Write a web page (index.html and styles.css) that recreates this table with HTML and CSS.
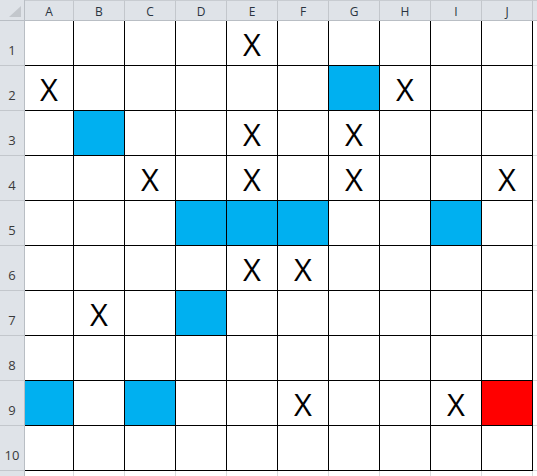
FILE: index.html
```html
<!DOCTYPE html>
<html>
<head>
<meta charset="utf-8">
<link rel="stylesheet" href="styles.css">
</head>
<body>
<div class="sheet">
  <div class="corner"><svg class="tri" width="12" height="11" viewBox="0 0 12 11"><polygon points="12,0 12,11 0,11" fill="#c3c7cc"/></svg></div>
  <div class="ch ca">A</div><div class="ch">B</div><div class="ch">C</div><div class="ch">D</div><div class="ch">E</div><div class="ch">F</div><div class="ch">G</div><div class="ch">H</div><div class="ch">I</div><div class="ch">J</div><div class="ch kh"></div>

  <div class="rh">1</div>
  <div class="c"></div><div class="c"></div><div class="c"></div><div class="c"></div><div class="c">X</div><div class="c"></div><div class="c"></div><div class="c"></div><div class="c"></div><div class="c"></div><div class="k"></div>

  <div class="rh">2</div>
  <div class="c">X</div><div class="c"></div><div class="c"></div><div class="c"></div><div class="c"></div><div class="c"></div><div class="c blue"></div><div class="c">X</div><div class="c"></div><div class="c"></div><div class="k"></div>

  <div class="rh">3</div>
  <div class="c"></div><div class="c blue"></div><div class="c"></div><div class="c"></div><div class="c">X</div><div class="c"></div><div class="c">X</div><div class="c"></div><div class="c"></div><div class="c"></div><div class="k"></div>

  <div class="rh">4</div>
  <div class="c"></div><div class="c"></div><div class="c">X</div><div class="c"></div><div class="c">X</div><div class="c"></div><div class="c">X</div><div class="c"></div><div class="c"></div><div class="c">X</div><div class="k"></div>

  <div class="rh">5</div>
  <div class="c"></div><div class="c"></div><div class="c"></div><div class="c blue"></div><div class="c blue"></div><div class="c blue"></div><div class="c"></div><div class="c"></div><div class="c blue"></div><div class="c"></div><div class="k"></div>

  <div class="rh">6</div>
  <div class="c"></div><div class="c"></div><div class="c"></div><div class="c"></div><div class="c">X</div><div class="c">X</div><div class="c"></div><div class="c"></div><div class="c"></div><div class="c"></div><div class="k"></div>

  <div class="rh">7</div>
  <div class="c"></div><div class="c">X</div><div class="c"></div><div class="c blue"></div><div class="c"></div><div class="c"></div><div class="c"></div><div class="c"></div><div class="c"></div><div class="c"></div><div class="k"></div>

  <div class="rh">8</div>
  <div class="c"></div><div class="c"></div><div class="c"></div><div class="c"></div><div class="c"></div><div class="c"></div><div class="c"></div><div class="c"></div><div class="c"></div><div class="c"></div><div class="k"></div>

  <div class="rh">9</div>
  <div class="c blue"></div><div class="c"></div><div class="c blue"></div><div class="c"></div><div class="c"></div><div class="c">X</div><div class="c"></div><div class="c"></div><div class="c">X</div><div class="c red"></div><div class="k"></div>

  <div class="rh">10</div>
  <div class="c"></div><div class="c"></div><div class="c"></div><div class="c"></div><div class="c"></div><div class="c"></div><div class="c"></div><div class="c"></div><div class="c"></div><div class="c"></div><div class="k"></div>

  <div class="rh"></div>
  <div class="e"></div><div class="e"></div><div class="e"></div><div class="e"></div><div class="e"></div><div class="e"></div><div class="e"></div><div class="e"></div><div class="e"></div><div class="e"></div><div class="e"></div>
</div>
</body>
</html>
```
FILE: styles.css
```css
html, body {
  margin: 0;
  padding: 0;
  background: #ffffff;
  overflow: hidden;
}

.sheet {
  display: grid;
  grid-template-columns: 25px 49px repeat(9, 51px) 40px;
  grid-template-rows: 21px repeat(10, 45px) 30px;
  width: 537px;
  height: 476px;
  overflow: hidden;
  font-family: "Open Sans", "Liberation Sans", sans-serif;
}

.sheet > div {
  box-sizing: border-box;
}

.corner {
  background: #dfe3e8;
  border-right: 1px solid #b9bec4;
  border-bottom: 1px solid #b9bec4;
  display: flex;
  align-items: flex-end;
  justify-content: flex-end;
  padding: 0 3px 3px 0;
}

.tri {
  display: block;
}

.ch {
  background: #dfe3e8;
  border-top: 1px solid #c8ccd1;
  border-right: 1px solid #c3c7cc;
  border-bottom: 1px solid #b9bec4;
  color: #2a3440;
  font-size: 12px;
  display: flex;
  align-items: center;
  justify-content: center;
  padding-top: 1px;
}

.rh {
  background: #dfe3e8;
  border-right: 1px solid #b9bec4;
  border-bottom: 1px solid #c3c7cc;
  color: #3a3a3a;
  font-size: 13px;
  line-height: 1;
  display: flex;
  align-items: flex-end;
  justify-content: center;
  padding-bottom: 8px;
}

.c {
  border-right: 1px solid #000000;
  border-bottom: 1px solid #000000;
  font-size: 31px;
  line-height: 1;
  color: #000000;
  display: flex;
  align-items: flex-end;
  justify-content: center;
  padding-bottom: 5px;
}

.k {
  border-bottom: 1px solid #dadcdd;
}

.e {
  border-right: 1px solid #dadcdd;
}

.blue {
  background: #00b0f0;
}

.red {
  background: #ff0000;
}
```
